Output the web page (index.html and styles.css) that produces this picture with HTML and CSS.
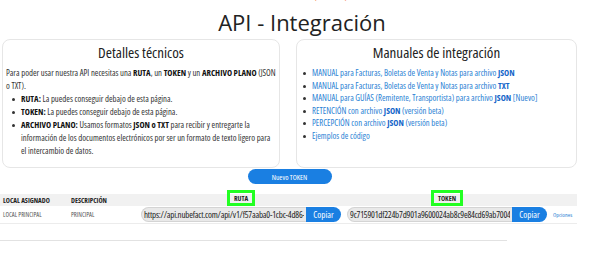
FILE: index.html
```html
<!DOCTYPE html>
<html lang="es">

<head>
    <meta charset="UTF-8">
    <meta name="viewport" content="width=device-width, initial-scale=1.0">
    <title>API - Integración</title>
    <link rel="stylesheet" href="styles.css">
</head>

<body>
    <div class="page">
        <p class="notice">• Información adicional (Nubefact)</p>

        <h1 class="title">API - Integración</h1>

        <div class="cards">
            <section class="card">
                <h2>Detalles técnicos</h2>
                <p>Para poder usar nuestra API necesitas una <b>RUTA</b>, un <b>TOKEN</b> y un <b>ARCHIVO PLANO</b> (JSON o TXT).</p>
                <ul>
                    <li><b>RUTA:</b> La puedes conseguir debajo de esta página.</li>
                    <li><b>TOKEN:</b> La puedes conseguir debajo de esta página.</li>
                    <li><b>ARCHIVO PLANO:</b> Usamos formatos <b>JSON o TXT</b> para recibir y entregarte la información de los documentos electrónicos por ser un formato de texto ligero para el intercambio de datos.</li>
                </ul>
            </section>

            <section class="card">
                <h2>Manuales de integración</h2>
                <ul class="links">
                    <li><a href="#">MANUAL para Facturas, Boletas de Venta y Notas para archivo <b>JSON</b></a></li>
                    <li><a href="#">MANUAL para Facturas, Boletas de Venta y Notas para archivo <b>TXT</b></a></li>
                    <li><a href="#">MANUAL para GUÍAS (Remitente, Transportista) para archivo <b>JSON</b> [Nuevo]</a></li>
                    <li><a href="#">RETENCIÓN con archivo <b>JSON</b> (versión beta)</a></li>
                    <li><a href="#">PERCEPCIÓN con archivo <b>JSON</b> (versión beta)</a></li>
                    <li><a href="#">Ejemplos de código</a></li>
                </ul>
            </section>
        </div>

        <div class="actions">
            <button class="btn-pill">Nuevo TOKEN</button>
        </div>

        <table class="tokens">
            <thead>
                <tr>
                    <th class="col-local">LOCAL ASIGNADO</th>
                    <th class="col-desc">DESCRIPCIÓN</th>
                    <th class="col-field"><span class="mark">RUTA</span></th>
                    <th class="col-field"><span class="mark">TOKEN</span></th>
                    <th class="col-opt"></th>
                </tr>
            </thead>
            <tbody>
                <tr>
                    <td class="small">LOCAL PRINCIPAL</td>
                    <td class="small">PRINCIPAL</td>
                    <td>
                        <div class="copy-group">
                            <input type="text" value="https://api.nubefact.com/api/v1/f57aaba0-1cbc-4d86-97a1-3b5d2c2f0e11" readonly>
                            <button>Copiar</button>
                        </div>
                    </td>
                    <td>
                        <div class="copy-group">
                            <input type="text" value="9c715901df224b7d901a9600024ab8c9e84cd69ab7004e1f" readonly>
                            <button>Copiar</button>
                        </div>
                    </td>
                    <td><a href="#" class="opt">Opciones</a></td>
                </tr>
            </tbody>
        </table>

        <hr class="divider">
    </div>
</body>

</html>
```

FILE: styles.css
```css
* {
    margin: 0;
    padding: 0;
    box-sizing: border-box;
}

body {
    font-family: "Open Sans", "Noto Sans", sans-serif;
    font-stretch: 75%;
    background-color: #ffffff;
    color: #333;
    overflow: hidden;
}

.page {
    width: 577px;
}

.notice {
    color: #f47a3c;
    font-size: 9px;
    text-align: center;
    line-height: 10px;
    margin-top: -8px;
    padding-left: 10px;
}

.title {
    font-weight: 400;
    font-size: 22px;
    font-stretch: 100%;
    line-height: 30px;
    text-align: center;
    color: #222;
    margin-top: 5px;
    padding-left: 27px;
}

.cards {
    display: grid;
    grid-template-columns: 278px 281px;
    gap: 16px;
    margin-top: 2px;
    padding-left: 2px;
}

.card {
    border: 1px solid #e6e6e6;
    border-radius: 8px;
    height: 129px;
    padding: 2px 3px 0 3px;
    font-size: 8.7px;
    line-height: 13px;
    color: #333;
}

.card h2 {
    font-weight: 400;
    font-size: 15px;
    line-height: 20px;
    text-align: center;
    color: #222;
    margin-bottom: 5px;
}

.card b {
    color: #111;
}

.card ul {
    list-style: none;
    padding-left: 6px;
}

.card li {
    position: relative;
    padding-left: 9px;
}

.card li::before {
    content: "";
    position: absolute;
    left: 0;
    top: 5px;
    width: 3px;
    height: 3px;
    border-radius: 50%;
    background-color: #333;
}

.card .links {
    line-height: 12.5px;
    padding-left: 3px;
}

.links a {
    color: #2a7fd4;
    text-decoration: none;
}

.links a b {
    color: #1566c9;
}

.actions {
    display: flex;
    justify-content: center;
    margin-top: 1px;
    padding-left: 2px;
}

.btn-pill {
    font-family: inherit;
    font-stretch: 75%;
    width: 84px;
    height: 15px;
    border: none;
    border-radius: 8px;
    background-color: #1a7fe2;
    color: #fff;
    font-size: 7.5px;
}

.tokens {
    width: 577px;
    border-collapse: collapse;
    margin-top: 10px;
    font-size: 7px;
}

.tokens th {
    background-color: #f1f1f1;
    height: 12px;
    text-align: left;
    font-weight: 700;
    color: #222;
    padding: 0 3px;
}

.tokens th.col-field {
    text-align: center;
    padding: 0;
}

.col-local {
    width: 68px;
}

.col-desc {
    width: 70px;
}

.col-opt {
    width: 27px;
}

.mark {
    display: inline-block;
    border: 3px solid #22ff22;
    padding: 1px 4px 0;
    line-height: 9px;
    margin-top: -5px;
}

.tokens td {
    height: 17px;
    border-bottom: 1px solid #ececec;
    padding: 0 3px;
    color: #555;
}

.tokens td.small {
    font-size: 6.5px;
}

.copy-group {
    display: flex;
    align-items: center;
}

.copy-group input {
    font-family: inherit;
    font-stretch: 75%;
    flex: 1;
    min-width: 0;
    height: 15px;
    border: 1px solid #d4d4d4;
    border-right: none;
    border-radius: 8px 0 0 8px;
    background-color: #e9e9e9;
    color: #222;
    font-size: 9px;
    letter-spacing: -0.2px;
    padding: 0 2px;
}

.copy-group button {
    font-family: inherit;
    font-stretch: 75%;
    width: 35px;
    height: 15px;
    border: none;
    border-radius: 0 8px 8px 0;
    background-color: #1a7fe2;
    color: #fff;
    font-size: 9px;
}

.opt {
    color: #2a7fd4;
    font-size: 6px;
    text-decoration: none;
}

.divider {
    width: 507px;
    border: none;
    border-top: 1px solid #e2e2e2;
    margin-top: 16px;
}
```
